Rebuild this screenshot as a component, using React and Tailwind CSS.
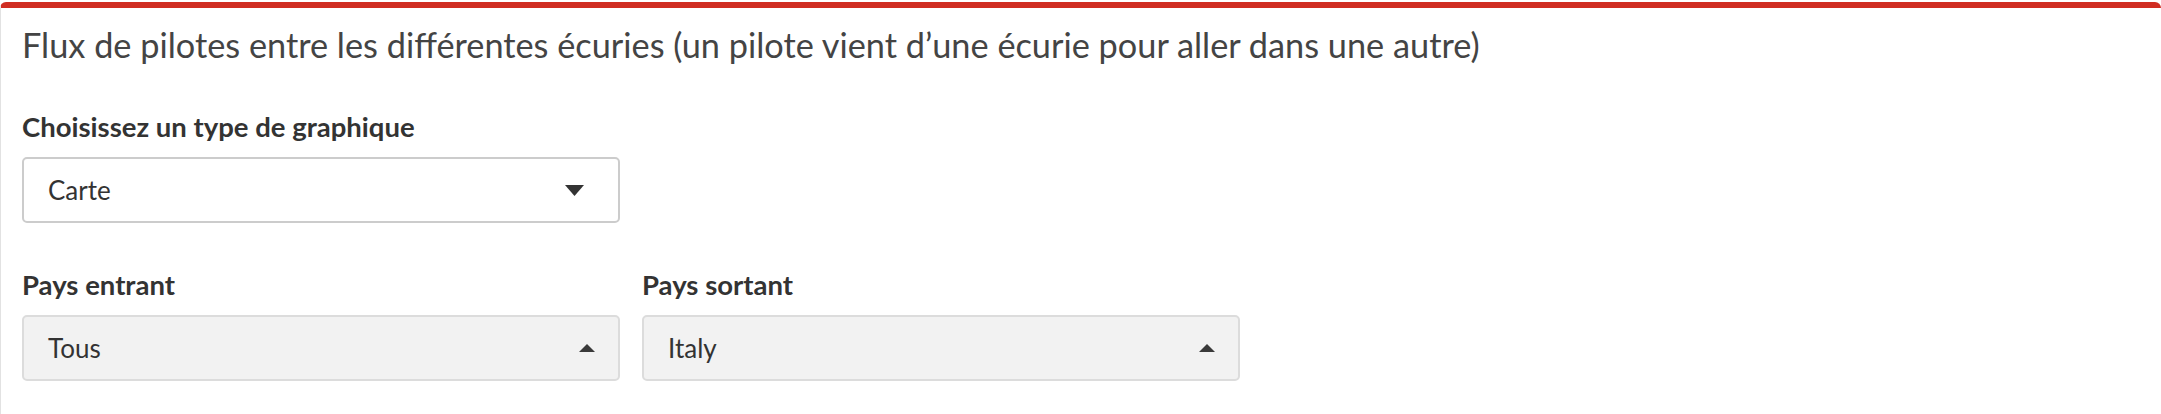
import React from "react";

const font = { fontFamily: "Lato, 'Open Sans', sans-serif" };

function CaretDown() {
  return (
    <svg width="19" height="11" viewBox="0 0 19 11" className="shrink-0">
      <path d="M0 0 H19 L9.5 11 Z" fill="#333" />
    </svg>
  );
}

function CaretUp() {
  return (
    <svg width="16" height="8" viewBox="0 0 16 8" className="shrink-0">
      <path d="M0 8 H16 L8 0 Z" fill="#3a3a3a" />
    </svg>
  );
}

function Field({ label, value, open, className }) {
  return (
    <div className={"flex flex-col w-[598px] " + (className || "")}>
      <div className="h-[30px] leading-[30px] text-[27.5px] font-bold text-[#333] whitespace-nowrap">{label}</div>
      <div
        className={
          open
            ? "mt-[15px] h-[66px] rounded-[5px] border-2 border-[#dcdcdc] bg-[#f2f2f2] flex items-center justify-between pl-[24px] pr-[23px]"
            : "mt-[15px] h-[66px] rounded-[5px] border-2 border-[#cccccc] bg-white flex items-center justify-between pl-[24px] pr-[34px]"
        }
      >
        <span className="text-[26px] text-[#333]">{value}</span>
        {open ? <CaretUp /> : <CaretDown />}
      </div>
    </div>
  );
}

export default function App() {
  return (
    <div className="w-full h-[414px] bg-white pt-[2px] overflow-hidden" style={font}>
      <div className="h-full rounded-t-[6px] border-t-[6px] border-t-[#d02d22] border-l border-l-[#e2e2e2]">
        <div className="pl-[21px] pt-[17px] h-[40px] box-content leading-[40px] text-[34.3px] text-[#444] whitespace-nowrap">
          Flux de pilotes entre les différentes écuries (un pilote vient d’une écurie pour aller dans une autre)
        </div>
        <div className="pl-[21px] pt-[47px]">
          <Field label="Choisissez un type de graphique" value="Carte" />
        </div>
        <div className="pl-[21px] pt-[47px] flex gap-[22px]">
          <Field label="Pays entrant" value="Tous" open />
          <Field label="Pays sortant" value="Italy" open />
        </div>
      </div>
    </div>
  );
}
